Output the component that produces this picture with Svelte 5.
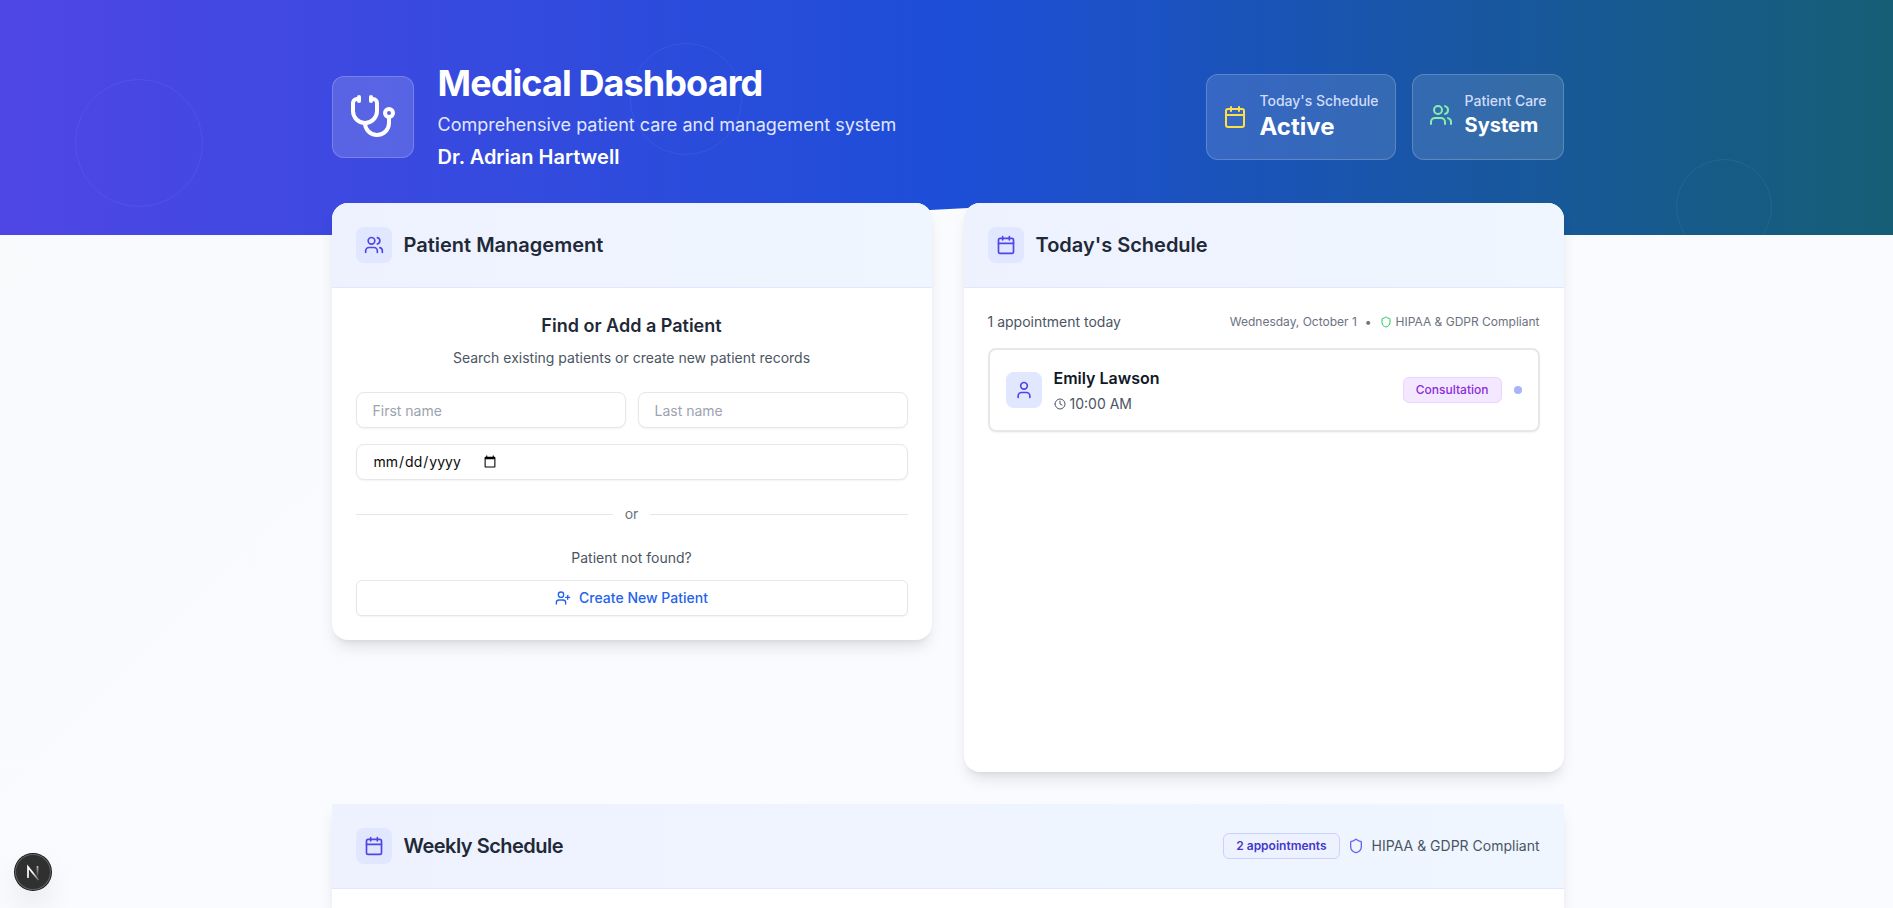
<script>
	const icons = {
		calendar: ['M8 2v4', 'M16 2v4', 'M5 4h14a2 2 0 0 1 2 2v14a2 2 0 0 1-2 2H5a2 2 0 0 1-2-2V6a2 2 0 0 1 2-2z', 'M3 10h18'],
		users: [
			'M16 21v-2a4 4 0 0 0-4-4H6a4 4 0 0 0-4 4v2',
			'M5 7a4 4 0 1 0 8 0a4 4 0 1 0-8 0',
			'M22 21v-2a4 4 0 0 0-3-3.87',
			'M16 3.13a4 4 0 0 1 0 7.75'
		],
		user: ['M19 21v-2a4 4 0 0 0-4-4H9a4 4 0 0 0-4 4v2', 'M8 7a4 4 0 1 0 8 0a4 4 0 1 0-8 0'],
		userPlus: [
			'M16 21v-2a4 4 0 0 0-4-4H6a4 4 0 0 0-4 4v2',
			'M5 7a4 4 0 1 0 8 0a4 4 0 1 0-8 0',
			'M19 8v6',
			'M22 11h-6'
		],
		shield: [
			'M20 13c0 5-3.5 7.5-7.66 8.95a1 1 0 0 1-.67-.01C7.5 20.5 4 18 4 13V6a1 1 0 0 1 1-1c2 0 4.5-1.2 6.24-2.72a1.17 1.17 0 0 1 1.52 0C14.51 3.81 17 5 19 5a1 1 0 0 1 1 1z'
		],
		clock: ['M2 12a10 10 0 1 0 20 0a10 10 0 1 0-20 0', 'M12 6v6l4 2'],
		stethoscope: [
			'M11 2v2',
			'M5 2v2',
			'M5 3H4a2 2 0 0 0-2 2v4a6 6 0 0 0 12 0V5a2 2 0 0 0-2-2h-1',
			'M8 15a6 6 0 0 0 12 0v-3',
			'M18 10a2 2 0 1 0 4 0a2 2 0 1 0-4 0'
		]
	};

	const appointments = [{ id: 1, name: 'Emily Lawson', time: '10:00 AM', type: 'Consultation' }];

	let firstName = '';
	let lastName = '';
	let birthDate = '';
</script>

<div class="page">
	<header class="hero">
		<span class="ring ring-left"></span>
		<span class="ring ring-center"></span>
		<span class="ring ring-right"></span>
		<div class="container hero-content">
			<svg class="wedge" viewBox="0 0 1232 32" preserveAspectRatio="none" aria-hidden="true">
				<path d="M0 32L598 7L636 5L1232 32z" />
			</svg>
			<div class="brand">
				<div class="brand-icon">
					<svg class="icon icon-xl" viewBox="0 0 24 24">
						{#each icons.stethoscope as d}<path {d} />{/each}
					</svg>
				</div>
				<div>
					<h1>Medical Dashboard</h1>
					<p class="tagline">Comprehensive patient care and management system</p>
					<p class="doctor">Dr. Adrian Hartwell</p>
				</div>
			</div>
			<div class="stats">
				<div class="stat">
					<div class="stat-row">
						<svg class="icon icon-lg yellow" viewBox="0 0 24 24">
							{#each icons.calendar as d}<path {d} />{/each}
						</svg>
						<div>
							<p class="stat-label">Today's Schedule</p>
							<p class="stat-value">Active</p>
						</div>
					</div>
				</div>
				<div class="stat">
					<div class="stat-row">
						<svg class="icon icon-lg green" viewBox="0 0 24 24">
							{#each icons.users as d}<path {d} />{/each}
						</svg>
						<div>
							<p class="stat-label">Patient Care</p>
							<p class="stat-value small">System</p>
						</div>
					</div>
				</div>
			</div>
		</div>
	</header>

	<main class="container">
		<div class="columns">
			<section class="card">
				<div class="card-header">
					<span class="icon-box">
						<svg class="icon icon-md" viewBox="0 0 24 24">
							{#each icons.users as d}<path {d} />{/each}
						</svg>
					</span>
					<h2>Patient Management</h2>
				</div>
				<div class="card-body">
					<h3>Find or Add a Patient</h3>
					<p class="hint">Search existing patients or create new patient records</p>
					<form on:submit|preventDefault>
						<div class="names">
							<input type="text" placeholder="First name" aria-label="First name" bind:value={firstName} />
							<input type="text" placeholder="Last name" aria-label="Last name" bind:value={lastName} />
						</div>
						<input type="date" aria-label="Date of birth" bind:value={birthDate} />
					</form>
					<div class="divider"><span>or</span></div>
					<p class="not-found">Patient not found?</p>
					<button type="button" class="create">
						<svg class="icon icon-sm" viewBox="0 0 24 24">
							{#each icons.userPlus as d}<path {d} />{/each}
						</svg>
						Create New Patient
					</button>
				</div>
			</section>

			<section class="card">
				<div class="card-header">
					<span class="icon-box">
						<svg class="icon icon-md" viewBox="0 0 24 24">
							{#each icons.calendar as d}<path {d} />{/each}
						</svg>
					</span>
					<h2>Today's Schedule</h2>
				</div>
				<div class="card-body">
					<div class="summary">
						<span>1 appointment today</span>
						<div class="meta">
							<span>Wednesday, October 1</span>
							<span>•</span>
							<span class="compliant">
								<svg class="icon icon-xs" viewBox="0 0 24 24">
									{#each icons.shield as d}<path {d} />{/each}
								</svg>
								HIPAA &amp; GDPR Compliant
							</span>
						</div>
					</div>
					<div class="list">
						{#each appointments as item}
							<div class="appointment">
								<span class="icon-box">
									<svg class="icon icon-md" viewBox="0 0 24 24">
										{#each icons.user as d}<path {d} />{/each}
									</svg>
								</span>
								<div class="who">
									<p class="name">{item.name}</p>
									<p class="time">
										<svg class="icon icon-xs" viewBox="0 0 24 24">
											{#each icons.clock as d}<path {d} />{/each}
										</svg>
										{item.time}
									</p>
								</div>
								<span class="badge purple">{item.type}</span>
								<span class="dot"></span>
							</div>
						{/each}
					</div>
				</div>
			</section>
		</div>

		<section class="card weekly">
			<div class="card-header">
				<span class="icon-box">
					<svg class="icon icon-md" viewBox="0 0 24 24">
						{#each icons.calendar as d}<path {d} />{/each}
					</svg>
				</span>
				<h2>Weekly Schedule</h2>
				<div class="weekly-meta">
					<span class="badge indigo">2 appointments</span>
					<svg class="icon icon-sm" viewBox="0 0 24 24">
						{#each icons.shield as d}<path {d} />{/each}
					</svg>
					<span>HIPAA &amp; GDPR Compliant</span>
				</div>
			</div>
		</section>
	</main>

	<button type="button" class="dev-tools" aria-label="Open Next.js Dev Tools">
		<svg viewBox="0 0 36 36" fill="none">
			<defs>
				<linearGradient id="stem" x1="0" y1="12" x2="0" y2="23" gradientUnits="userSpaceOnUse">
					<stop stop-color="#fff" stop-opacity="0.7" />
					<stop offset="1" stop-color="#fff" stop-opacity="0" />
				</linearGradient>
				<linearGradient id="slash" x1="18" y1="18" x2="24" y2="26" gradientUnits="userSpaceOnUse">
					<stop stop-color="#fff" />
					<stop offset="1" stop-color="#fff" stop-opacity="0.2" />
				</linearGradient>
			</defs>
			<path d="M13 24V13L23.500 26" stroke="url(#slash)" stroke-width="1.700" />
			<path d="M22.500 12v11" stroke="url(#stem)" stroke-width="1.700" />
		</svg>
	</button>
</div>

<style>
	:global(body) {
		margin: 0;
		font-family: Inter, 'Liberation Sans', sans-serif;
		color: #1f2937;
	}

	h1,
	h2,
	h3,
	p {
		margin: 0;
	}

	.page {
		display: flex;
		flex-direction: column;
		box-sizing: border-box;
		min-height: 100vh;
		font-size: 14px;
		line-height: 20px;
		background: linear-gradient(135deg, #f8fafc 0%, #fafbff 50%, #fafbff 100%);
	}

	.container {
		box-sizing: border-box;
		width: 100%;
		max-width: 1282px;
		margin: 0 auto;
		padding: 0 24px 0 26px;
	}

	/* hero */
	.hero {
		position: relative;
		overflow: hidden;
		color: #fff;
		background: linear-gradient(to right, #4f46e5, #1d4ed8 50%, #155e75);
	}

	.hero-content {
		position: relative;
		display: flex;
		align-items: center;
		justify-content: space-between;
		padding-top: 63px;
		padding-bottom: 64px;
	}

	.ring {
		position: absolute;
		box-sizing: border-box;
		border: 1px solid rgba(255, 255, 255, 0.06);
		border-radius: 50%;
	}

	.ring-left {
		top: 79px;
		left: 75px;
		width: 128px;
		height: 128px;
	}

	.ring-center {
		top: 43px;
		left: 33.3%;
		width: 112px;
		height: 112px;
	}

	.ring-right {
		top: 159px;
		right: 121px;
		width: 96px;
		height: 96px;
	}

	.wedge {
		position: absolute;
		bottom: 0;
		left: 26px;
		width: calc(100% - 50px);
		height: 32px;
		fill: #fafbfd;
	}

	.brand {
		display: flex;
		align-items: center;
		gap: 24px;
	}

	.brand-icon {
		padding: 16px;
		border: 1px solid rgba(255, 255, 255, 0.2);
		border-radius: 12px;
		background: rgba(255, 255, 255, 0.15);
	}

	h1 {
		font-size: 36px;
		font-weight: 700;
		line-height: 40px;
		letter-spacing: -0.025em;
	}

	.tagline {
		margin-top: 8px;
		font-size: 18px;
		line-height: 28px;
		color: #e0e7ff;
	}

	.doctor {
		margin-top: 4px;
		font-size: 20px;
		font-weight: 600;
		line-height: 28px;
	}

	.stats {
		display: flex;
		gap: 16px;
	}

	.stat {
		padding: 16px;
		border: 1px solid rgba(255, 255, 255, 0.2);
		border-radius: 12px;
		background: rgba(255, 255, 255, 0.12);
	}

	.stat-row {
		display: flex;
		align-items: center;
		gap: 12px;
	}

	.stat-label {
		font-weight: 500;
		color: #d0dcfb;
	}

	.stat-value {
		font-size: 24px;
		font-weight: 700;
		line-height: 32px;
	}

	.stat-value.small {
		font-size: 20px;
		line-height: 28px;
	}

	/* icons */
	.icon {
		display: block;
		flex: none;
		fill: none;
		stroke: currentColor;
		stroke-width: 2;
		stroke-linecap: round;
		stroke-linejoin: round;
	}

	.icon-xs {
		width: 12px;
		height: 12px;
	}

	.icon-sm {
		width: 16px;
		height: 16px;
	}

	.icon-md {
		width: 20px;
		height: 20px;
	}

	.icon-lg {
		width: 24px;
		height: 24px;
	}

	.icon-xl {
		width: 48px;
		height: 48px;
	}

	.yellow {
		color: #fde047;
	}

	.green {
		color: #86efac;
	}

	.icon-box {
		flex: none;
		padding: 8px;
		border-radius: 8px;
		color: #4f46e5;
		background: #e0e7ff;
	}

	/* cards */
	main {
		position: relative;
		display: flex;
		flex: 1;
		flex-direction: column;
		gap: 32px;
	}

	.columns {
		display: grid;
		grid-template-columns: 1fr 1fr;
		align-items: start;
		gap: 32px;
		margin-top: -32px;
	}

	.card {
		border-radius: 16px;
		background: #fff;
		box-shadow:
			0 10px 15px -3px rgba(0, 0, 0, 0.1),
			0 4px 6px -4px rgba(0, 0, 0, 0.1);
	}

	.card-header {
		display: flex;
		align-items: center;
		gap: 12px;
		padding: 24px;
		border-bottom: 1px solid #e0e7ff;
		border-radius: 16px 16px 0 0;
		background: linear-gradient(to right, #eef2ff, #eff6ff);
	}

	h2 {
		font-size: 20px;
		font-weight: 600;
		line-height: 28px;
	}

	.card-body {
		padding: 24px;
	}

	h3 {
		font-size: 18px;
		font-weight: 600;
		line-height: 28px;
		text-align: center;
	}

	.hint {
		margin-top: 8px;
		color: #4b5563;
		text-align: center;
	}

	form {
		display: grid;
		gap: 16px;
		margin-top: 24px;
	}

	.names {
		display: grid;
		grid-template-columns: 1fr 1fr;
		gap: 12px;
	}

	input {
		display: flex;
		box-sizing: border-box;
		width: 100%;
		height: 36px;
		padding: 4px 16px;
		border: 1px solid #e5e7eb;
		border-radius: 8px;
		font: inherit;
		color: #0a0a0a;
		background: #fff;
		box-shadow: 0 1px 2px rgba(0, 0, 0, 0.05);
	}

	input::placeholder {
		color: #9ca3af;
	}

	.divider {
		display: flex;
		align-items: center;
		gap: 12px;
		margin-top: 24px;
		color: #6b7280;
	}

	.divider::before,
	.divider::after {
		flex: 1;
		height: 1px;
		background: #e5e7eb;
		content: '';
	}

	.not-found {
		margin: 24px 0 12px;
		color: #4b5563;
		text-align: center;
	}

	.create {
		display: flex;
		align-items: center;
		justify-content: center;
		gap: 8px;
		width: 100%;
		height: 36px;
		border: 1px solid #e5e7eb;
		border-radius: 6px;
		font: inherit;
		font-weight: 500;
		color: #2563eb;
		background: #fff;
		box-shadow: 0 1px 2px rgba(0, 0, 0, 0.05);
		cursor: pointer;
	}

	.summary {
		display: flex;
		align-items: center;
		justify-content: space-between;
		color: #4b5563;
	}

	.meta {
		display: flex;
		gap: 8px;
		font-size: 12px;
		color: #6b7280;
	}

	.compliant,
	.time {
		display: flex;
		align-items: center;
		gap: 4px;
	}

	.compliant .icon {
		color: #22c55e;
	}

	.list {
		min-height: 400px;
		margin-top: 16px;
	}

	.appointment {
		display: flex;
		align-items: center;
		gap: 12px;
		padding: 16px;
		border: 2px solid #e5e7eb;
		border-radius: 8px;
		box-shadow: 0 1px 2px rgba(0, 0, 0, 0.05);
	}

	.who {
		flex: 1;
	}

	.name {
		font-size: 16px;
		font-weight: 600;
		line-height: 24px;
		color: #111827;
	}

	.time {
		margin-top: 4px;
		color: #4b5563;
	}

	.badge {
		padding: 4px 12px;
		border: 1px solid;
		border-radius: 6px;
		font-size: 12px;
		font-weight: 500;
		line-height: 16px;
	}

	.badge.purple {
		border-color: #e9d5ff;
		color: #8b2cd8;
		background: #f3e8ff;
	}

	.badge.indigo {
		border-color: #c7d2fe;
		font-weight: 600;
		color: #4338ca;
		background: #eef2ff;
	}

	.dot {
		width: 8px;
		height: 8px;
		border-radius: 50%;
		background: #a5b4fc;
	}

	.weekly {
		flex: 1;
		border-radius: 0;
	}

	.weekly .card-header {
		border-radius: 0;
	}

	.weekly h2 {
		letter-spacing: -0.025em;
	}

	.weekly-meta {
		display: flex;
		align-items: center;
		gap: 8px;
		margin-left: auto;
		color: #4b5563;
	}

	.weekly-meta .icon {
		color: #6366f1;
	}

	.dev-tools {
		position: fixed;
		bottom: 18px;
		left: 15px;
		width: 36px;
		height: 36px;
		padding: 0;
		border: 0;
		border-radius: 50%;
		background: #303030;
		box-shadow:
			0 0 0 1px #171717,
			inset 0 0 0 1px #636363,
			0 16px 32px -8px rgba(0, 0, 0, 0.24);
	}

	.dev-tools svg {
		display: block;
		width: 36px;
		height: 36px;
	}
</style>
